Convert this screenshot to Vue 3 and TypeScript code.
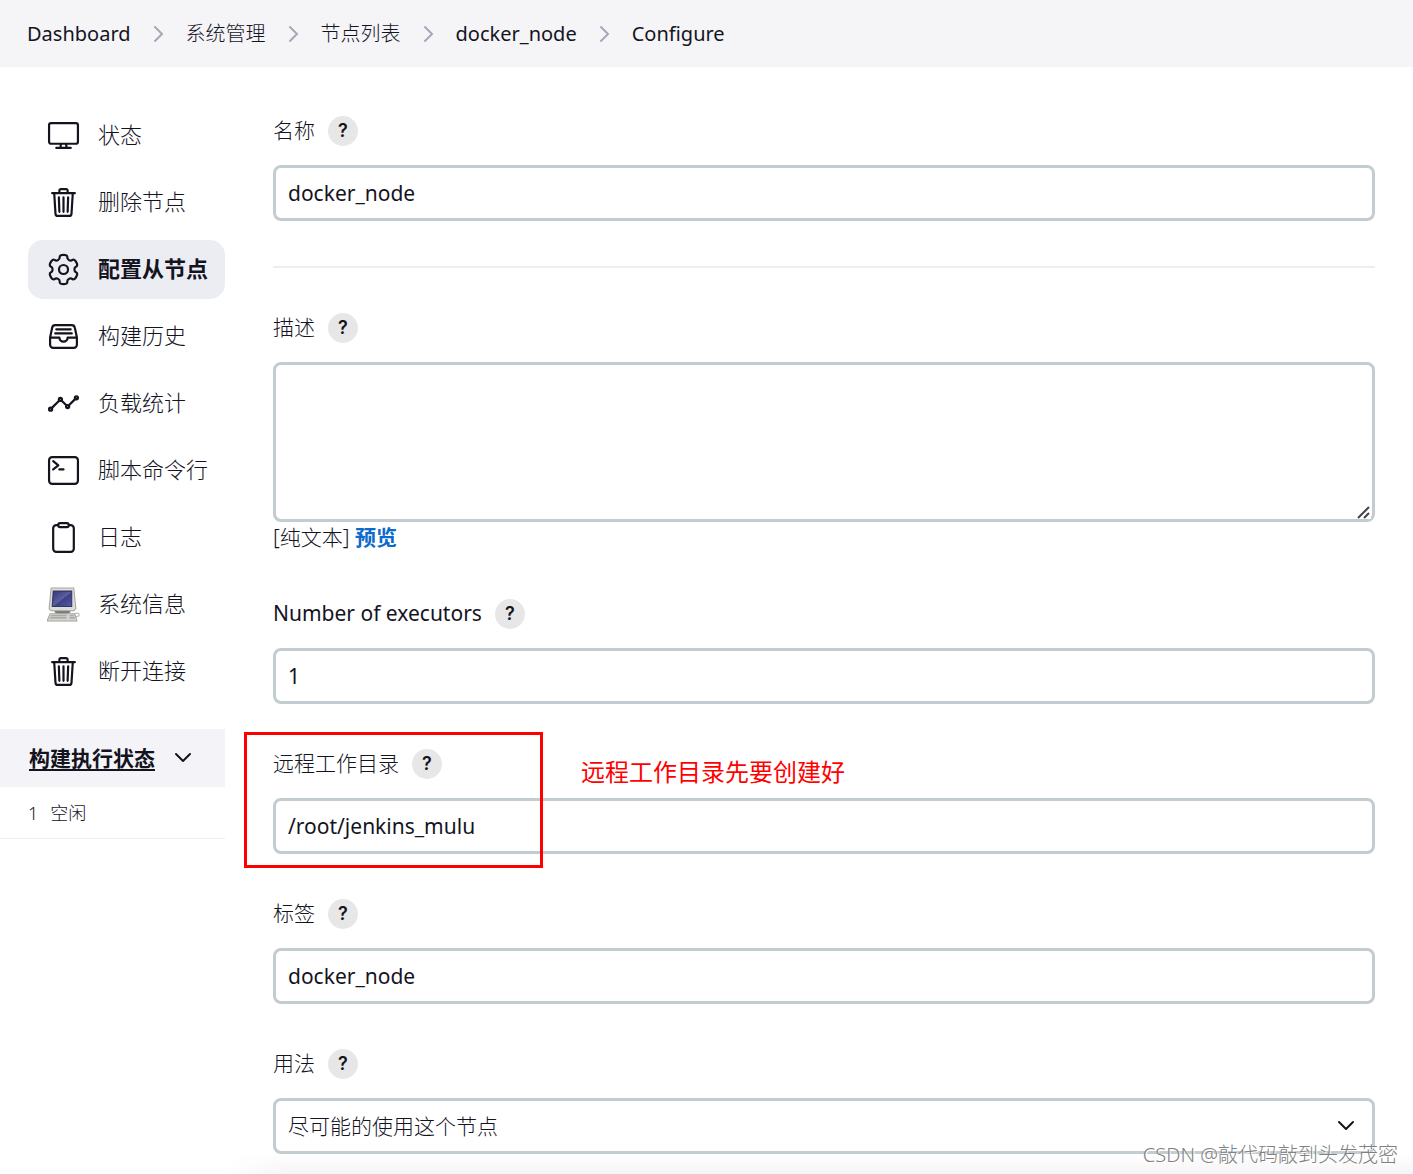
<script setup lang="ts">
import { ref } from 'vue'

interface Task {
  text: string
  icon: string
  active?: boolean
}

const crumbs: string[] = ['Dashboard', '系统管理', '节点列表', 'docker_node', 'Configure']

const tasks: Task[] = [
  { text: '状态', icon: 'desktop' },
  { text: '删除节点', icon: 'trash' },
  { text: '配置从节点', icon: 'gear', active: true },
  { text: '构建历史', icon: 'tray' },
  { text: '负载统计', icon: 'chart' },
  { text: '脚本命令行', icon: 'terminal' },
  { text: '日志', icon: 'clipboard' },
  { text: '系统信息', icon: 'computer' },
  { text: '断开连接', icon: 'trash' },
]

// Six rounded teeth around the centre of a 512-unit box, with a round hole.
function gearPath(): string {
  const corners: [number, number][] = []
  for (let tooth = 0; tooth < 6; tooth++) {
    for (const [offset, radius] of [[-19, 172], [-15, 236], [15, 236], [19, 172]]) {
      const angle = ((tooth * 60 + offset - 90) * Math.PI) / 180
      corners.push([256 + radius * Math.cos(angle), 256 + radius * Math.sin(angle)])
    }
  }
  const middle = (i: number): string => {
    const a = corners[i % corners.length]
    const b = corners[(i + 1) % corners.length]
    return `${(a[0] + b[0]) / 2} ${(a[1] + b[1]) / 2}`
  }
  const start = middle(corners.length - 1)
  const curves = corners.map((c, i) => `Q${c[0]} ${c[1]} ${middle(i)}`).join('')
  return `M${start}${curves}zM326 256a70 70 0 11-140 0a70 70 0 01140 0z`
}

const strokes: Record<string, string> = {
  desktop:
    'M64 64h384a32 32 0 0132 32v256a32 32 0 01-32 32H64a32 32 0 01-32-32V96a32 32 0 0132-32zM304 448l-8-64h-80l-8 64zM368 448H144',
  trash:
    'M112 112l20 320c.95 18.49 14.4 32 32 32h184c17.67 0 30.87-13.51 32-32l20-320M80 112h352M192 112V72a23.93 23.93 0 0124-24h80a23.93 23.93 0 0124 24v40M256 176v224M184 176l8 224M328 176l-8 224',
  gear: gearPath(),
  tray:
    'M384 80H128c-26 0-43 14-48 40L48 272v112a48.14 48.14 0 0048 48h320a48.14 48.14 0 0048-48V272l-32-152c-5-27-23-40-48-40zM48 272h144M320 272h144M192 272a64 64 0 00128 0M144 144h224M128 208h256',
  chart:
    'M344 280l88-88M232 216l64 64M80 320l104-104M480 168a24 24 0 11-48 0a24 24 0 0148 0zM344 304a24 24 0 11-48 0a24 24 0 0148 0zM232 192a24 24 0 11-48 0a24 24 0 0148 0zM80 344a24 24 0 11-48 0a24 24 0 0148 0z',
  terminal:
    'M80 48h352a48 48 0 0148 48v320a48 48 0 01-48 48H80a48 48 0 01-48-48V96a48 48 0 0148-48zM96 112l80 64-80 64M192 240h64',
  clipboard:
    'M336 64h32a48 48 0 0148 48v320a48 48 0 01-48 48H144a48 48 0 01-48-48V112a48 48 0 0148-48h32M202 32h108a26 26 0 0126 26v12a26 26 0 01-26 26H202a26 26 0 01-26-26V58a26 26 0 0126-26z',
}

const name = ref('docker_node')
const description = ref('')
const executors = ref('1')
const remoteDir = ref('/root/jenkins_mulu')
const labels = ref('docker_node')
const usage = ref('normal')
</script>

<template>
  <div class="page">
    <nav class="breadcrumbs" aria-label="breadcrumb">
      <template v-for="(crumb, i) in crumbs" :key="crumb">
        <svg v-if="i > 0" class="crumb-arrow" viewBox="0 0 12 18" aria-hidden="true">
          <path d="M2 2l7 7-7 7" />
        </svg>
        <a href="#" :class="{ latin: /^\w+$/.test(crumb) }">{{ crumb }}</a>
      </template>
    </nav>

    <div class="body">
      <aside class="sidebar">
        <nav class="tasks">
          <a v-for="task in tasks" :key="task.text" href="#" class="task" :class="{ active: task.active }">
            <svg v-if="task.icon === 'computer'" class="computer" viewBox="0 0 32 34" aria-hidden="true">
              <defs>
                <linearGradient id="screen" x1="0" y1="0" x2="1" y2="1">
                  <stop offset="0" stop-color="#34347c" />
                  <stop offset="0.5" stop-color="#5c609c" />
                  <stop offset="0.55" stop-color="#3c4088" />
                  <stop offset="1" stop-color="#5459a0" />
                </linearGradient>
              </defs>
              <ellipse cx="15" cy="24" rx="8" ry="2" fill="#777a74" />
              <path d="M4 1h22l2 20-2 2H4l-2-2z" fill="#deded9" stroke="#a5a6a1" />
              <path d="M6 4h18v15H5z" fill="url(#screen)" stroke="#34346b" />
              <path d="M27 26q5-2 4 2l-3 1" fill="none" stroke="#b5b6b1" />
              <path d="M3 26h24l2 7H0z" fill="#d5d6d1" stroke="#a2a39e" />
              <path d="M4 28h15M3 30h16M22 28h4M22 30h5" stroke="#9a9b96" />
            </svg>
            <svg v-else class="task-icon" viewBox="0 0 512 512" aria-hidden="true">
              <path :d="strokes[task.icon]" />
            </svg>
            <span>{{ task.text }}</span>
          </a>
        </nav>

        <section class="executors">
          <div class="executors-head">
            <a href="#">构建执行状态</a>
            <button type="button" aria-label="collapse">
              <svg class="chevron" viewBox="0 0 20 12" aria-hidden="true"><path d="M3 2l7 7 7-7" /></svg>
            </button>
          </div>
          <div class="executor-row"><span>1</span><span>空闲</span></div>
        </section>
      </aside>

      <main class="form">
        <div class="field">
          <div class="field-head">
            <label for="name">名称</label>
            <button type="button" class="help">?</button>
          </div>
          <input id="name" v-model="name" class="control latin" type="text" />
        </div>

        <hr />

        <div class="field">
          <div class="field-head">
            <label for="description">描述</label>
            <button type="button" class="help">?</button>
          </div>
          <div class="textarea">
            <textarea id="description" v-model="description" class="control"></textarea>
            <svg class="grip" viewBox="0 0 14 14" aria-hidden="true"><path d="M1 13L12 2M7 13l5-5" /></svg>
          </div>
          <div class="format">[纯文本] <a href="#">预览</a></div>
        </div>

        <div class="field">
          <div class="field-head">
            <label for="executors" class="latin">Number of executors</label>
            <button type="button" class="help">?</button>
          </div>
          <input id="executors" v-model="executors" class="control latin" type="text" />
        </div>

        <div class="field">
          <div class="field-head">
            <label for="remote">远程工作目录</label>
            <button type="button" class="help">?</button>
          </div>
          <input id="remote" v-model="remoteDir" class="control latin" type="text" />
          <div class="highlight"></div>
          <p class="note">远程工作目录先要创建好</p>
        </div>

        <div class="field">
          <div class="field-head">
            <label for="labels">标签</label>
            <button type="button" class="help">?</button>
          </div>
          <input id="labels" v-model="labels" class="control latin" type="text" />
        </div>

        <div class="field">
          <div class="field-head">
            <label for="usage">用法</label>
            <button type="button" class="help">?</button>
          </div>
          <div class="select">
            <select id="usage" v-model="usage" class="control">
              <option value="normal">尽可能的使用这个节点</option>
            </select>
            <svg class="chevron" viewBox="0 0 20 12" aria-hidden="true"><path d="M3 2l7 7 7-7" /></svg>
          </div>
        </div>
      </main>
    </div>

    <div class="bottom-shade"></div>
    <div class="watermark">CSDN @敲代码敲到头发茂密</div>
  </div>
</template>

<style>
body {
  margin: 0;
  background: #fff;
}
</style>

<style scoped>
.page {
  position: relative;
  overflow: hidden;
  color: #14141f;
  font-family: 'Noto Sans', 'Noto Sans CJK SC', sans-serif;
  font-size: 21px;
  font-weight: 300;
  line-height: 30px;
}

a {
  color: inherit;
  text-decoration: none;
}

button {
  padding: 0;
  border: 0;
  background: none;
  color: inherit;
  font: inherit;
}

svg {
  flex: none;
  fill: none;
}

.breadcrumbs {
  display: flex;
  align-items: center;
  height: 67px;
  padding-left: 27px;
  background: #f5f5f8;
  font-size: 20px;
}

.crumb-arrow {
  width: 12px;
  height: 18px;
  margin: 0 21px 0 22px;
  stroke: #a6a6b8;
  stroke-width: 2;
  stroke-linecap: round;
}

.body {
  display: grid;
  grid-template-columns: 225px minmax(0, 1fr);
  column-gap: 48px;
  padding-right: 38px;
}

.sidebar {
  padding-top: 39px;
}

.tasks {
  display: flex;
  flex-direction: column;
  gap: 8px;
  padding-left: 28px;
}

.task {
  display: flex;
  align-items: center;
  gap: 18px;
  height: 59px;
  padding-left: 19px;
  border-radius: 15px;
  font-size: 22px;
}

.task span {
  padding-bottom: 3px;
}

.task.active {
  background: #ecedf3;
  font-weight: 700;
}

.task-icon {
  width: 33px;
  height: 33px;
  stroke: #14141f;
  stroke-width: 34;
  stroke-linecap: round;
  stroke-linejoin: round;
}

.computer {
  width: 33px;
  height: 35px;
}

.executors {
  margin-top: 28px;
}

.executors-head {
  display: flex;
  align-items: center;
  gap: 18px;
  height: 58px;
  padding-left: 29px;
  background: #f3f3f8;
  font-weight: 700;
}

.executors-head a {
  text-decoration: underline;
  text-decoration-thickness: 2px;
  text-underline-offset: 3px;
}

.executors-head button {
  display: flex;
}

.chevron {
  width: 20px;
  height: 12px;
  stroke: #14141f;
  stroke-width: 2;
  stroke-linecap: round;
  stroke-linejoin: round;
}

.executor-row {
  display: flex;
  align-items: center;
  gap: 12px;
  height: 51px;
  padding-left: 28px;
  border-bottom: 1px solid #eeeef1;
  font-size: 18px;
}

.form {
  display: flex;
  flex-direction: column;
  gap: 45px;
  padding-top: 49px;
}

.field {
  position: relative;
  display: flex;
  flex-direction: column;
}

.field-head {
  display: flex;
  align-items: center;
  gap: 13px;
  height: 30px;
  margin-bottom: 19px;
}

.field-head label {
  padding-bottom: 2px;
}

.help {
  width: 30px;
  height: 30px;
  border-radius: 50%;
  background: #e7e7e7;
  font-family: Inter, sans-serif;
  font-size: 18px;
  font-weight: 600;
}

.control {
  box-sizing: border-box;
  display: block;
  width: 100%;
  height: 56px;
  margin: 0;
  padding: 0 12px;
  border: 3px solid #c3ccd1;
  border-radius: 8px;
  background: #fff;
  color: inherit;
  font: inherit;
}

.latin,
.control.latin {
  font-weight: 400;
}

.textarea,
.select {
  position: relative;
}

textarea.control {
  height: 160px;
  resize: vertical;
}

.grip {
  position: absolute;
  right: 4px;
  bottom: 3px;
  width: 14px;
  height: 14px;
  background: #fff;
  stroke: #444;
  stroke-width: 2;
  pointer-events: none;
}

hr {
  width: 100%;
  height: 2px;
  margin: 0;
  border: 0;
  background: #eeeef1;
}

.format {
  padding-bottom: 2px;
}

.format a {
  color: #0b6acb;
  font-weight: 700;
}

.select select {
  appearance: none;
}

.select .chevron {
  position: absolute;
  top: 22px;
  right: 19px;
  pointer-events: none;
}

.highlight {
  position: absolute;
  top: -17px;
  left: -29px;
  box-sizing: border-box;
  width: 299px;
  height: 136px;
  border: 3px solid #f00;
  pointer-events: none;
}

.note {
  position: absolute;
  top: 8px;
  left: 308px;
  margin: 0;
  color: #f00;
  font-size: 24px;
  font-weight: 400;
}

.bottom-shade {
  height: 20px;
  margin-left: 225px;
  background: linear-gradient(to right, #fff, transparent 60px), linear-gradient(#fff, #f5f5f5);
}

.watermark {
  position: absolute;
  right: 15px;
  bottom: 4px;
  color: #808080;
  font-size: 20px;
  text-shadow: 1px 1px 0 #fff;
}
</style>
